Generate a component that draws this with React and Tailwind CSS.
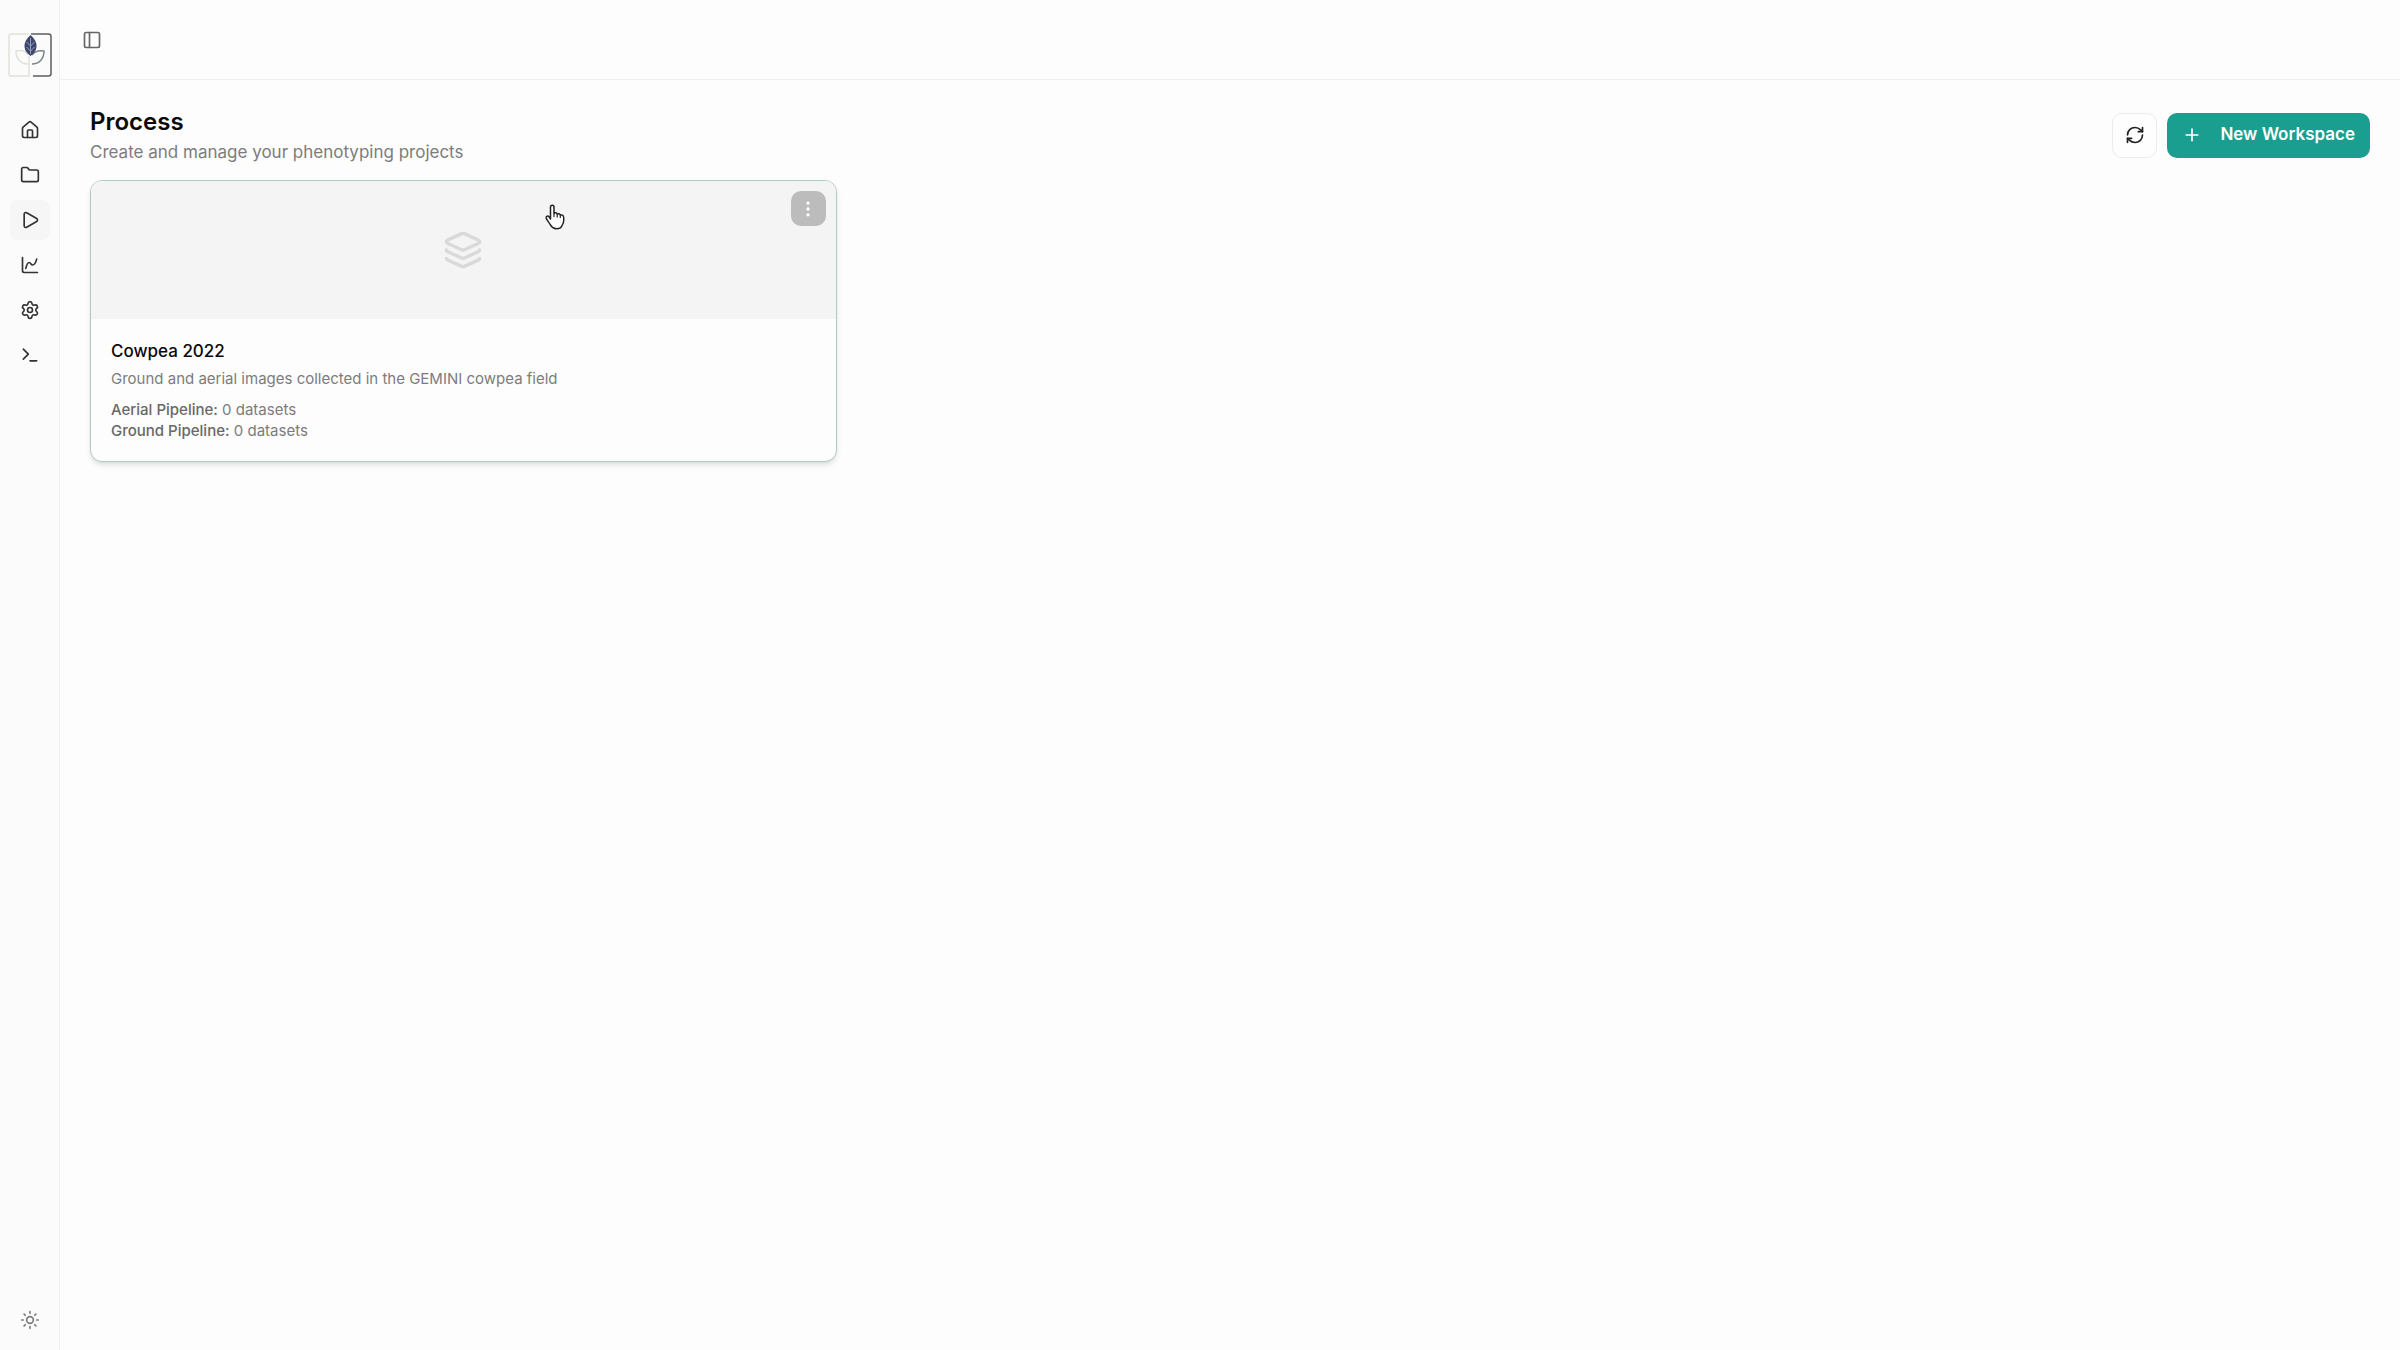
import {
  ChartSpline,
  EllipsisVertical,
  Folder,
  House,
  Layers,
  PanelLeft,
  Play,
  Plus,
  RefreshCw,
  Settings,
  Sun,
  Terminal,
} from 'lucide-react'
import clsx from 'clsx'

const NAV_ITEMS = [
  { label: 'Home', icon: House },
  { label: 'Files', icon: Folder },
  { label: 'Process', icon: Play, active: true },
  { label: 'Analyze', icon: ChartSpline },
  { label: 'Settings', icon: Settings },
  { label: 'Console', icon: Terminal },
]

const WORKSPACES = [
  {
    id: 1,
    name: 'Cowpea 2022',
    description: 'Ground and aerial images collected in the GEMINI cowpea field',
    aerial: 0,
    ground: 0,
  },
]

function Logo() {
  return (
    <svg viewBox="0 0 44 44" className="size-11" fill="none" aria-hidden="true">
      <path d="M21 1H3.500Q1 1 1 3.500V40.500Q1 43 3.500 43H21V23" stroke="#e0e2da" strokeWidth="1.500" />
      <path d="M23 1H40.500Q43 1 43 3.500V40.500Q43 43 40.500 43H25" stroke="#5c5f61" strokeWidth="1.500" />
      <path d="M20 22C18 18 13 17 8 18C8 26 13 31 20 31" stroke="#e0e2da" strokeWidth="1.500" />
      <path d="M24 22C27 18 31 17 36 18C36 26 31 31 24 31" stroke="#7b8587" strokeWidth="1.500" />
      <path
        d="M22.500 2C27 6 29 10 28.500 14C28 18 26 20 22.500 23C19 20 17 18 16.500 14C16 10 18 6 22.500 2Z"
        fill="#3d466f"
      />
      <path
        d="M22.500 5V21M18.500 9L22.500 13L26.500 9M18.500 14L22.500 18L26.500 14"
        stroke="#a3a9c2"
        strokeWidth="0.900"
      />
    </svg>
  )
}

function Sidebar() {
  return (
    <aside className="flex w-[60px] shrink-0 flex-col items-center justify-between border-r border-[#f0f0f0] bg-[#fbfbfb] pt-[33px] pb-2.5">
      <div className="flex flex-col items-center gap-[33px]">
        <a href="#home" aria-label="GEMINI home">
          <Logo />
        </a>
        <nav className="flex flex-col gap-[5px]">
          {NAV_ITEMS.map(({ label, icon: Icon, active }) => (
            <a
              key={label}
              href={`#${label.toLowerCase()}`}
              aria-label={label}
              aria-current={active ? 'page' : undefined}
              className={clsx(
                'flex size-10 items-center justify-center rounded-lg text-[#333333]',
                active && 'bg-[#f6f6f6]',
              )}
            >
              <Icon className="size-5" />
            </a>
          ))}
        </nav>
      </div>
      <button
        type="button"
        aria-label="Toggle theme"
        className="flex size-10 items-center justify-center rounded-lg text-[#7c7c7c]"
      >
        <Sun className="size-5" />
      </button>
    </aside>
  )
}

function PointerCursor() {
  return (
    <svg
      viewBox="0 0 20 26"
      className="absolute top-[23px] left-[454px] h-[26px] w-5"
      aria-hidden="true"
    >
      <path
        d="M5.500 15V3.200C5.500 .6 9 .6 9 3.200V9.500C9.500 8.300 12 8.500 12.200 10.200C13 9.200 15 9.600 15.300 11.200C16.500 10.500 18.700 11 18.700 13.500V16.500C18.700 19 17.500 20.500 16.800 22C16 24 14 24.700 11.500 24.700C8 24.700 6.500 23 5.300 20.700C4.200 18.500 1.500 15.500 1.200 14C.8 12 3 11.500 4.200 13Z"
        fill="#ffffff"
        stroke="#222222"
        strokeWidth="1.500"
        strokeLinejoin="round"
      />
      <path d="M9 9.500V13M12.200 10.200V13.500M15.300 11.200V14" stroke="#222222" strokeWidth="1.200" />
    </svg>
  )
}

function WorkspaceCard({ workspace }) {
  return (
    <article className="relative overflow-hidden rounded-xl border border-[#afcbc8] bg-[#fdfdfd] shadow-md">
      <div className="flex h-[138px] items-center justify-center bg-[#f4f4f4]">
        <Layers className="size-10 text-[#d9d9d9]" />
      </div>
      <button
        type="button"
        aria-label={`${workspace.name} options`}
        className="absolute top-2.5 right-2.5 flex size-[35px] items-center justify-center rounded-[10px] bg-[#bcbcbc] text-white"
      >
        <EllipsisVertical className="size-5" />
      </button>
      <div className="p-5">
        <h2 className="text-[17px] leading-6 font-medium text-[#0a0a0a]">{workspace.name}</h2>
        <p className="mt-1.5 text-[15px] leading-5 text-[#7c7c7c]">{workspace.description}</p>
        <div className="mt-2.5 text-[15px] leading-[21px] text-[#7c7c7c]">
          <p>
            <span className="font-medium text-[#686868]">Aerial Pipeline:</span> {workspace.aerial} datasets
          </p>
          <p>
            <span className="font-medium text-[#686868]">Ground Pipeline:</span> {workspace.ground} datasets
          </p>
        </div>
      </div>
      <PointerCursor />
    </article>
  )
}

export default function App() {
  return (
    <div className="flex min-h-screen bg-[#fdfdfd] font-['Inter',sans-serif] text-[#0a0a0a]">
      <Sidebar />
      <div className="min-w-0 flex-1">
        <header className="flex h-20 items-center border-b border-[#f0f0f0] px-[22px]">
          <button
            type="button"
            aria-label="Toggle sidebar"
            className="flex size-5 items-center justify-center text-[#666666]"
          >
            <PanelLeft className="size-5" />
          </button>
        </header>
        <main className="px-[30px] py-7">
          <div className="flex items-center justify-between">
            <div>
              <h1 className="text-2xl leading-7 font-semibold">Process</h1>
              <p className="mt-1.5 text-[17px] leading-5 text-[#7c7c7c]">
                Create and manage your phenotyping projects
              </p>
            </div>
            <div className="flex items-center gap-2.5">
              <button
                type="button"
                aria-label="Refresh"
                className="flex size-[45px] items-center justify-center rounded-[10px] border border-[#ececec] bg-[#fefefe] text-[#222222]"
              >
                <RefreshCw className="size-5" />
              </button>
              <button
                type="button"
                className="flex h-[45px] items-center gap-[18px] rounded-[10px] bg-[#1a9e8f] px-[15px] text-[17px] font-semibold text-white"
              >
                <Plus className="size-5" />
                New Workspace
              </button>
            </div>
          </div>
          <div className="mt-[18px] grid grid-cols-3 gap-5">
            {WORKSPACES.map((workspace) => (
              <WorkspaceCard key={workspace.id} workspace={workspace} />
            ))}
          </div>
        </main>
      </div>
    </div>
  )
}
